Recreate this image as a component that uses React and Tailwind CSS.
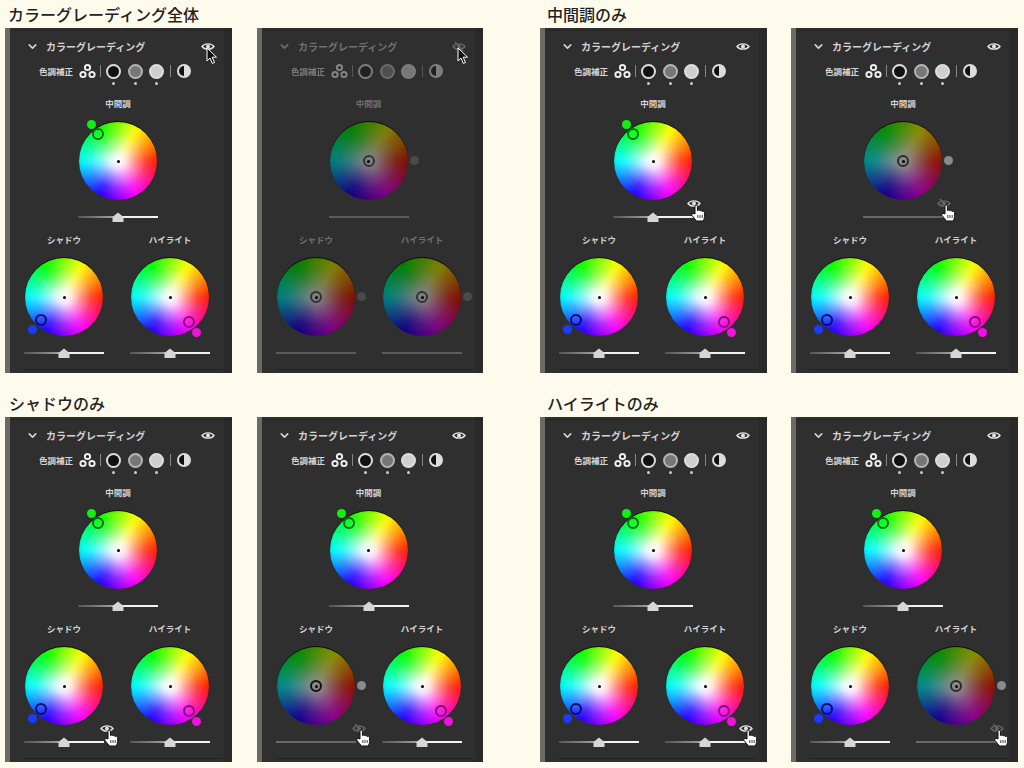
import { ChevronDown } from 'lucide-react';

const groups = [
  { title: 'カラーグレーディング全体', pad: 'pl-[3px]', wheel: null, gap: 'gap-[25px]', right: 'w-[226px]' },
  { title: '中間調のみ', pad: 'pl-[7px]', wheel: 'mid', gap: 'gap-[24px]', right: 'w-[227px]' },
  { title: 'シャドウのみ', pad: 'pl-[4px]', wheel: 'shadow', gap: 'gap-[25px]', right: 'w-[226px]' },
  { title: 'ハイライトのみ', pad: 'pl-[7px]', wheel: 'high', gap: 'gap-[24px]', right: 'w-[227px]' },
];

const pins = {
  mid: { dot: [12, 2], ring: [19, 12], dotClass: 'bg-[#12f012]', ringClass: 'border-[#0b6b12]' },
  shadow: { dot: [7, 71], ring: [16, 62], dotClass: 'bg-[#1a3cff]', ringClass: 'border-[#0a0a6e]' },
  high: { dot: [65, 74], ring: [58, 64], dotClass: 'bg-[#f010e0]', ringClass: 'border-[#7d0a78]' },
};

function EyeIcon({ off, className }) {
  return (
    <svg width="14" height="11" viewBox="0 0 14 11" className={className}>
      <path d="M1 5.5C3.5 2 10.5 2 13 5.5C10.5 9 3.5 9 1 5.5Z" fill="none" stroke="currentColor" strokeWidth="1.4" />
      <circle cx="7" cy="5.5" r="2" fill="currentColor" />
      {off && <path d="M3 1L11 10" stroke="currentColor" strokeWidth="1.3" />}
    </svg>
  );
}

function ArrowCursor({ className }) {
  return (
    <svg width="12" height="18" viewBox="0 0 12 18" className={className}>
      <path d="M1 1V14L4 11L6.3 16.5L8.5 15.5L6.2 10.2H10.5Z" fill="#111" stroke="#fff" strokeWidth="1" />
    </svg>
  );
}

function HandCursor({ className }) {
  return (
    <svg width="15" height="18" viewBox="0 0 15 18" className={className}>
      <path
        d="M4 10V2.2C4 .6 6.4 .6 6.4 2.2V6.6C7.2 5.6 8.8 6 9 7C9.7 6.2 11.2 6.6 11.3 7.6C12 7 13.6 7.4 13.6 8.6V12.5C13.6 14.5 12.8 15.5 12.3 17H5.2C4.7 15.5 3 14 1 11.5C.2 10.3 1.6 8.8 3 9.6Z"
        fill="#fff"
        stroke="#111"
        strokeWidth="1"
      />
      <path d="M6.8 11V14M9 11V14M11.2 11V14" stroke="#111" strokeWidth=".8" />
    </svg>
  );
}

function Wheel({ pin, muted, allOff }) {
  const spot = pins[pin];
  return (
    <div className="relative mx-px w-[78px] h-[78px]">
      <div className={`relative w-[78px] h-[78px] rounded-full overflow-hidden shadow-[0_-1px_0_#111] ${muted ? (allOff ? 'brightness-[.5]' : 'brightness-[.55]') : ''}`}>
        <div className="absolute inset-0 scale-110 blur-[3px] bg-[conic-gradient(from_30deg,#ffff00,#ff2000_60deg,#ff00ff_120deg,#2000ff_180deg,#00ffff_240deg,#00ff00_300deg,#ffff00_360deg)]" />
        <div className="absolute inset-0 bg-[radial-gradient(circle,#ffffff_0%,#ffffffd8_14%,#ffffff78_32%,#ffffff28_50%,#ffffff00_68%)]" />
      </div>
      {muted ? (
        <>
          <div className={`absolute left-[33px] top-[33px] w-3 h-3 rounded-full border-2 flex items-center justify-center ${allOff ? 'border-[#333]' : pin === 'shadow' ? 'border-[#111]' : 'border-[#2c2c2c]'}`}>
            <div className="w-[3px] h-[3px] rounded-full bg-black" />
          </div>
          <div className={`absolute left-[80px] top-[34px] w-[9px] h-[9px] rounded-full ${allOff ? 'bg-[#4a4a4a]' : 'bg-[#8a8a8a]'}`} />
        </>
      ) : (
        <>
          <div className="absolute left-[37.5px] top-[37.5px] w-[3px] h-[3px] rounded-full bg-black" />
          <div className={`absolute w-[9px] h-[9px] rounded-full -ml-[4.5px] -mt-[4.5px] ${spot.dotClass}`} style={{ left: spot.dot[0], top: spot.dot[1] }} />
          <div className={`absolute w-3 h-3 rounded-full border-2 -ml-1.5 -mt-1.5 ${spot.ringClass}`} style={{ left: spot.ring[0], top: spot.ring[1] }} />
        </>
      )}
    </div>
  );
}

function Slider({ muted, allOff }) {
  if (muted) {
    return (
      <div className="mt-3 h-2.5 flex items-center">
        <div className={`w-full h-[2px] ${allOff ? 'bg-[#5c5c5c]' : 'bg-[#686868]'}`} />
      </div>
    );
  }
  return (
    <div className="relative mt-3 h-2.5 flex items-center">
      <div className="w-1/2 h-[2px] bg-gradient-to-r from-[#555] to-[#aaa]" />
      <div className="w-1/2 h-[2px] bg-[#f2f2f2]" />
      <svg width="12" height="10" viewBox="0 0 12 10" className="absolute left-[34px] top-0">
        <path d="M6 .5L11.5 5V10H.5V5Z" fill="#d6d6d6" />
      </svg>
    </div>
  );
}

function Section({ label, pin, muted, allOff, hover, eyeLeft }) {
  return (
    <div className="relative w-20">
      <div className={`h-3 -translate-y-px flex items-center justify-center text-[8.5px] font-bold whitespace-nowrap ${allOff ? 'text-[#6f6f6f]' : 'text-[#d4d4d4]'}`}>{label}</div>
      <div className="mt-3">
        <Wheel pin={pin} muted={muted} allOff={allOff} />
      </div>
      <Slider muted={muted} allOff={allOff} />
      {hover && (
        <div className={`absolute top-[100px] ${eyeLeft}`}>
          <EyeIcon off={muted} className={muted ? 'text-[#666]' : 'text-[#e0e0e0]'} />
          <HandCursor className="absolute left-[4px] top-[6px]" />
        </div>
      )}
    </div>
  );
}

function ToneRow({ allOff }) {
  const dot = 'absolute left-[4px] top-[16px] w-[3px] h-[3px] rounded-full bg-[#ccc]';
  return (
    <div className={`mt-[9px] h-4 pl-[29px] flex items-center ${allOff ? 'opacity-45' : ''}`}>
      <span className="w-[34px] text-[8.5px] font-bold text-[#d4d4d4] whitespace-nowrap">色調補正</span>
      <svg width="17" height="16" viewBox="0 0 17 16" className="ml-[6px]">
        <circle cx="8.5" cy="4.5" r="2.6" fill="#222" stroke="#eee" strokeWidth="2" />
        <circle cx="4" cy="11.5" r="2.6" fill="#222" stroke="#eee" strokeWidth="2" />
        <circle cx="13" cy="11.5" r="2.6" fill="#222" stroke="#eee" strokeWidth="2" />
      </svg>
      <div className="ml-1 w-px h-3 bg-[#888]" />
      <div className="ml-[5px] relative w-[15px] h-[15px] rounded-full bg-[#111] border-2 border-[#ddd]">
        {!allOff && <div className={dot} />}
      </div>
      <div className="ml-[6.5px] relative w-[15px] h-[15px] rounded-full bg-[#777] border-2 border-[#b5b5b5]">
        {!allOff && <div className={dot} />}
      </div>
      <div className="ml-[6.5px] relative w-[15px] h-[15px] rounded-full bg-[#cfcfcf] border-2 border-[#dedede]">
        {!allOff && <div className={dot} />}
      </div>
      <div className="ml-[6px] w-px h-3 bg-[#888]" />
      <div className="ml-[6px] w-[14px] h-[14px] rounded-full border-2 border-[#ddd] bg-[linear-gradient(90deg,#111_50%,#ddd_50%)]" />
    </div>
  );
}

// mutedWheel: the wheel switched off, hoverWheel: the wheel with the eye + hand over it
function Panel({ width, midPad, allOff, arrow, mutedWheel, hoverWheel }) {
  return (
    <div className={`relative flex h-[345px] bg-[#2f2f2f] ${width}`}>
      <div className="w-[5px] bg-[#6b6b64]" />
      <div className="flex-1 relative">
        <div className="absolute top-[2px] inset-x-0 h-px bg-[#262626]" />
        <div className="absolute bottom-[3px] left-[14px] right-[10px] h-px bg-[#222]" />
        <div className="absolute inset-y-0 right-0 w-2 bg-black/10" />

        <div className={`relative mt-[10px] h-4 flex items-center justify-between pl-[16px] pr-[17px] ${allOff ? 'text-[#707070]' : 'text-[#d4d4d4]'}`}>
          <div className="flex items-center gap-[7px]">
            <ChevronDown size={13} strokeWidth={3} />
            <span className="text-[10px] font-bold whitespace-nowrap">カラーグレーディング</span>
          </div>
          <div className="relative flex">
            <EyeIcon off={allOff} className={allOff ? 'text-[#666]' : 'text-[#e4e4e4]'} />
            {arrow && <ArrowCursor className="absolute left-[5px] top-[6px]" />}
          </div>
        </div>

        <ToneRow allOff={allOff} />

        <div className={`mt-[19px] flex justify-center ${midPad}`}>
          <Section label="中間調" pin="mid" muted={allOff || mutedWheel === 'mid'} allOff={allOff} hover={hoverWheel === 'mid'} eyeLeft="left-[74px]" />
        </div>

        <div className="mt-3 pl-[14px] flex gap-[26px]">
          <Section label="シャドウ" pin="shadow" muted={allOff || mutedWheel === 'shadow'} allOff={allOff} hover={hoverWheel === 'shadow'} eyeLeft="left-[76px]" />
          <Section label="ハイライト" pin="high" muted={allOff || mutedWheel === 'high'} allOff={allOff} hover={hoverWheel === 'high'} eyeLeft="left-[74px]" />
        </div>
      </div>
    </div>
  );
}

export default function App() {
  return (
    <div className="w-[1024px] h-[768px] overflow-hidden bg-[#fffbec] pl-[5px] grid grid-cols-[478px_478px] gap-x-[57px] gap-y-4 content-start font-['Noto_Sans_CJK_JP','Noto_Sans',sans-serif]">
      {groups.map(g => (
        <div key={g.title}>
          <h2 className={`h-7 flex items-center text-base font-medium text-[#222] ${g.pad}`}>{g.title}</h2>
          <div className={`flex ${g.gap}`}>
            {g.wheel === null ? (
              <>
                <Panel width="w-[227px]" midPad="pr-[6px]" arrow />
                <Panel width={g.right} midPad="pr-[8px]" arrow allOff />
              </>
            ) : (
              <>
                <Panel width="w-[227px]" midPad="pr-[6px]" hoverWheel={g.wheel} />
                <Panel width={g.right} midPad="pr-[8px]" hoverWheel={g.wheel} mutedWheel={g.wheel} />
              </>
            )}
          </div>
        </div>
      ))}
    </div>
  );
}
